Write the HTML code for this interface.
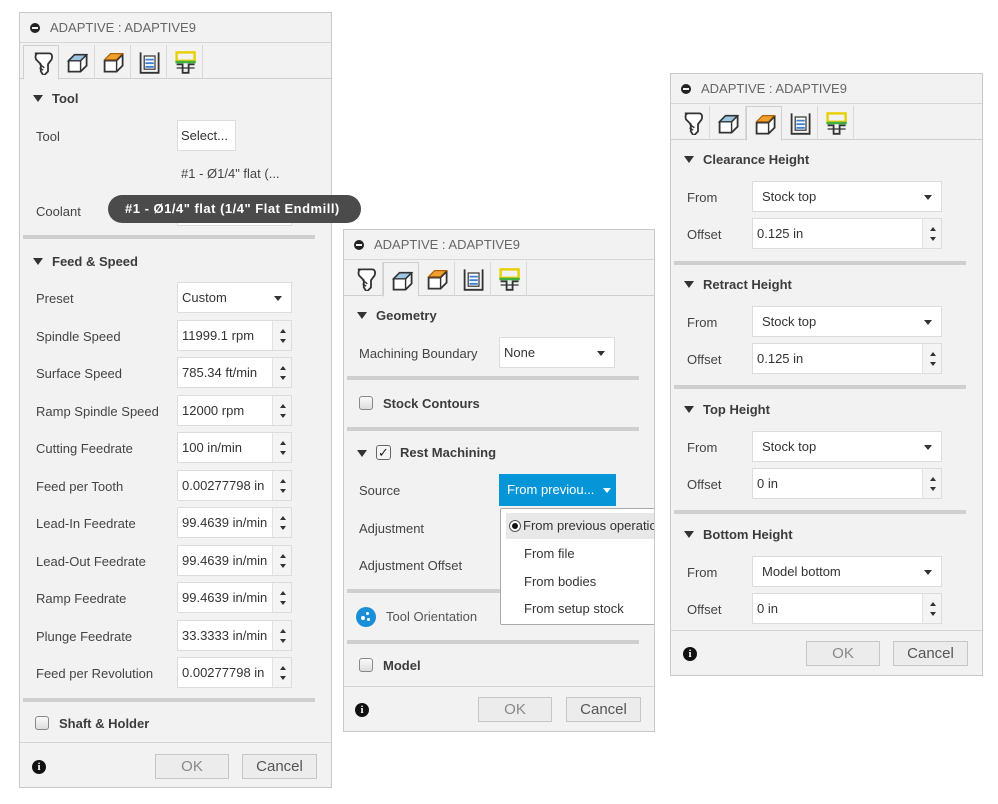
<!DOCTYPE html>
<html><head><meta charset="utf-8"><style>
*{box-sizing:border-box;margin:0;padding:0}
body{width:998px;height:804px;background:#fff;position:relative;overflow:hidden;font-family:"Liberation Sans",Arial,sans-serif;font-size:13px;color:#3c3c3c}
.p{position:absolute;background:#f2f2f2;border:1px solid #c9c9c9;overflow:hidden}
.a{position:absolute}
.title{position:absolute;left:0;right:0;top:0;height:30px;border-bottom:1px solid #d6d6d6;color:#666;font-size:13px;line-height:30px;padding-left:30px}
.title:before{content:"";position:absolute;left:10px;top:10px;width:10px;height:10px;border-radius:50%;background:#222}
.title:after{content:"";position:absolute;left:12px;top:14px;width:6px;height:2px;background:#f2f2f2}
.tabs{position:absolute;left:0;right:0;height:36px;border-bottom:1px solid #cfcfcf}
.tab{position:absolute;top:2px;width:36px;height:34px;border-right:1px solid #d8d8d8}
.tab.on{border:1px solid #cfcfcf;border-bottom:1px solid #f2f2f2;background:#f2f2f2;height:35px}
.tab svg{position:absolute;left:6px;top:5px}
.h{position:absolute;font-weight:bold;color:#3c3c3c;font-size:13px}
.h:before{content:"";display:inline-block;border-left:5px solid transparent;border-right:5px solid transparent;border-top:7px solid #333;margin-right:9px;vertical-align:1px}
.hc{position:absolute;font-weight:bold;font-size:13px;color:#3c3c3c}
.cb{display:inline-block;width:14px;height:14px;border:1px solid #888;border-radius:3px;background:linear-gradient(#fafafa,#ddd);vertical-align:-2px;margin-right:10px}
.l{position:absolute;font-size:13px;color:#444;white-space:nowrap}
.f{position:absolute;background:#fff;border:1px solid #dcdcdc;height:31px;line-height:29px;padding-left:4px;font-size:13px;color:#333;white-space:nowrap;overflow:hidden}
.sel:after{content:"";position:absolute;right:9px;top:13px;border-left:4px solid transparent;border-right:4px solid transparent;border-top:5px solid #333}
.sp{position:absolute;right:0;top:0;width:19px;height:29px;background:#f4f4f4;border-left:1px solid #e2e2e2}
.sp:before{content:"";position:absolute;left:7px;top:8px;border-left:3px solid transparent;border-right:3px solid transparent;border-bottom:4px solid #333}
.sp:after{content:"";position:absolute;left:7px;top:18px;border-left:3px solid transparent;border-right:3px solid transparent;border-top:4px solid #333}
.sep{position:absolute;height:4px;background:#cfcfcf}
.foot{position:absolute;left:0;right:0;border-top:1px solid #d6d6d6}
.btn{position:absolute;height:25px;border:1px solid #c6c6c6;background:#ececec;text-align:center;line-height:23px;font-size:15px;color:#888}
.btn.c{color:#555}
.info{position:absolute;width:14px;height:14px;border-radius:50%;background:#111;color:#fff;font-weight:bold;font-size:11px;text-align:center;line-height:14px;font-family:"Liberation Serif",serif}
</style></head><body>

<svg width="0" height="0" style="position:absolute"><defs>
<g id="i1"><path d="M4 2h12c2 0 3 2 2 5l-3 4v6l-3 3h-1l-2-3v-6l-4-4c-1-3 0-5 2-5z" fill="#fff" stroke="#333" stroke-width="1.5"/><path d="M8 11l4 3M8 14l3 2" stroke="#333" stroke-width="1.2"/></g>
<g id="i2"><path d="M3 9l5-5h10v9l-5 5H3z" fill="#fff" stroke="#333" stroke-width="1.5"/><path d="M8 4h10l-5 5H3z" fill="#9cc6e6" stroke="#333" stroke-width="1.2"/><path d="M13 9v9M13 9l5-5" stroke="#333" stroke-width="1.2"/></g>
<g id="i3"><path d="M3 9l5-5h10v9l-5 5H3z" fill="#fff" stroke="#333" stroke-width="1.5"/><path d="M8 3h10l-5 5H3z" fill="#f0a030" stroke="#b06000" stroke-width="1"/><path d="M13 9v9M13 9l5-5M3 9h10" stroke="#333" stroke-width="1.2"/></g>
<g id="i4"><path d="M3 2v17h15V2" fill="none" stroke="#333" stroke-width="1.5"/><rect x="6" y="5" width="9" height="11" fill="#fff" stroke="#333"/><path d="M7 8h7M7 11h7M7 14h7" stroke="#3b7fd0" stroke-width="1.5"/></g>
<g id="i5"><rect x="3" y="2" width="15" height="7" fill="none" stroke="#e8d000" stroke-width="2"/><path d="M2 10h17" stroke="#40b040" stroke-width="2"/><path d="M3 12h5v7h5v-7h5" fill="none" stroke="#333" stroke-width="1.5"/><path d="M3 15h15" stroke="#333" stroke-width="1"/></g>
</defs></svg>

<!-- LEFT PANEL -->
<div class="p" style="left:19px;top:12px;width:313px;height:776px">
<div class="title">ADAPTIVE : ADAPTIVE9</div>
<div class="tabs" style="top:30px">
<div class="tab on" style="left:3px"><svg width="24" height="24" viewBox="0 0 20 20"><use href="#i1"/></svg></div>
<div class="tab" style="left:39px"><svg width="24" height="24" viewBox="0 0 20 20"><use href="#i2"/></svg></div>
<div class="tab" style="left:75px"><svg width="24" height="24" viewBox="0 0 20 20"><use href="#i3"/></svg></div>
<div class="tab" style="left:111px"><svg width="24" height="24" viewBox="0 0 20 20"><use href="#i4"/></svg></div>
<div class="tab" style="left:147px"><svg width="24" height="24" viewBox="0 0 20 20"><use href="#i5"/></svg></div>
</div>
<div class="h" style="left:13px;top:78px">Tool</div>
<div class="l" style="left:16px;top:116px">Tool</div>
<div class="f" style="left:157px;top:107px;width:59px;padding-left:3px">Select...</div>
<div class="l" style="left:161px;top:153px">#1 - Ø1/4" flat (...</div>
<div class="l" style="left:16px;top:191px">Coolant</div>
<div class="f" style="left:157px;top:182px;width:115px"></div>
<div class="sep" style="left:3px;top:222px;width:292px"></div>
<div class="h" style="left:13px;top:241px">Feed &amp; Speed</div>
<div class="l" style="left:16px;top:278px">Preset</div><div class="f sel" style="left:157px;top:269px;width:115px">Custom</div>
<div class="l" style="left:16px;top:316px">Spindle Speed</div><div class="f" style="left:157px;top:307px;width:115px">11999.1 rpm<div class="sp"></div></div>
<div class="l" style="left:16px;top:353px">Surface Speed</div><div class="f" style="left:157px;top:344px;width:115px">785.34 ft/min<div class="sp"></div></div>
<div class="l" style="left:16px;top:391px">Ramp Spindle Speed</div><div class="f" style="left:157px;top:382px;width:115px">12000 rpm<div class="sp"></div></div>
<div class="l" style="left:16px;top:428px">Cutting Feedrate</div><div class="f" style="left:157px;top:419px;width:115px">100 in/min<div class="sp"></div></div>
<div class="l" style="left:16px;top:466px">Feed per Tooth</div><div class="f" style="left:157px;top:457px;width:115px">0.00277798 in<div class="sp"></div></div>
<div class="l" style="left:16px;top:503px">Lead-In Feedrate</div><div class="f" style="left:157px;top:494px;width:115px">99.4639 in/min<div class="sp"></div></div>
<div class="l" style="left:16px;top:541px">Lead-Out Feedrate</div><div class="f" style="left:157px;top:532px;width:115px">99.4639 in/min<div class="sp"></div></div>
<div class="l" style="left:16px;top:578px">Ramp Feedrate</div><div class="f" style="left:157px;top:569px;width:115px">99.4639 in/min<div class="sp"></div></div>
<div class="l" style="left:16px;top:616px">Plunge Feedrate</div><div class="f" style="left:157px;top:607px;width:115px">33.3333 in/min<div class="sp"></div></div>
<div class="l" style="left:16px;top:653px">Feed per Revolution</div><div class="f" style="left:157px;top:644px;width:115px">0.00277798 in<div class="sp"></div></div>
<div class="sep" style="left:3px;top:685px;width:292px"></div>
<div class="hc" style="left:15px;top:703px"><span class="cb"></span>Shaft &amp; Holder</div>
<div class="foot" style="top:729px"></div>
<div class="info" style="left:12px;top:747px">i</div>
<div class="btn" style="left:135px;top:741px;width:74px">OK</div>
<div class="btn c" style="left:222px;top:741px;width:75px">Cancel</div>
</div>

<!-- tooltip -->
<div class="a" style="left:108px;top:195px;width:253px;height:28px;background:#4b4b4b;border-radius:14px;color:#fff;font-weight:bold;font-size:13px;line-height:28px;padding-left:17px;white-space:nowrap;overflow:hidden;letter-spacing:0.5px">#1 - Ø1/4" flat (1/4" Flat Endmill)</div>

<!-- MIDDLE PANEL -->
<div class="p" style="left:343px;top:229px;width:312px;height:503px">
<div class="title">ADAPTIVE : ADAPTIVE9</div>
<div class="tabs" style="top:30px">
<div class="tab" style="left:3px"><svg width="24" height="24" viewBox="0 0 20 20"><use href="#i1"/></svg></div>
<div class="tab on" style="left:39px"><svg width="24" height="24" viewBox="0 0 20 20"><use href="#i2"/></svg></div>
<div class="tab" style="left:75px"><svg width="24" height="24" viewBox="0 0 20 20"><use href="#i3"/></svg></div>
<div class="tab" style="left:111px"><svg width="24" height="24" viewBox="0 0 20 20"><use href="#i4"/></svg></div>
<div class="tab" style="left:147px"><svg width="24" height="24" viewBox="0 0 20 20"><use href="#i5"/></svg></div>
</div>
<div class="h" style="left:13px;top:78px">Geometry</div>
<div class="l" style="left:15px;top:116px">Machining Boundary</div><div class="f sel" style="left:155px;top:107px;width:116px">None</div>
<div class="sep" style="left:3px;top:146px;width:292px"></div>
<div class="hc" style="left:15px;top:166px"><span class="cb"></span>Stock Contours</div>
<div class="sep" style="left:3px;top:197px;width:292px"></div>
<div class="a" style="left:13px;top:220px;border-left:5px solid transparent;border-right:5px solid transparent;border-top:7px solid #333"></div>
<div class="a" style="left:32px;top:215px;width:15px;height:15px;border:1px solid #666;border-radius:3px;background:#f6f6f6;font-size:13px;line-height:13px;text-align:center;color:#222">✓</div>
<div class="hc" style="left:56px;top:215px">Rest Machining</div>
<div class="l" style="left:15px;top:253px">Source</div>
<div class="a" style="left:155px;top:244px;width:117px;height:32px;background:#0696d7;color:#fff;line-height:32px;padding-left:8px;font-size:13px">From previou...</div>
<div class="a" style="left:259px;top:258px;border-left:4px solid transparent;border-right:4px solid transparent;border-top:5px solid #fff"></div>
<div class="l" style="left:15px;top:291px">Adjustment</div>
<div class="l" style="left:15px;top:328px">Adjustment Offset</div>
<div class="sep" style="left:3px;top:359px;width:292px"></div>
<div class="a" style="left:12px;top:377px;width:20px;height:20px;border-radius:50%;background:#1a8fd8"><div class="a" style="left:5px;top:9px;width:4px;height:4px;background:#fff;border-radius:50%"></div><div class="a" style="left:10px;top:5px;width:3px;height:3px;background:#fff;border-radius:50%"></div><div class="a" style="left:11px;top:11px;width:3px;height:3px;background:#fff;border-radius:50%"></div></div>
<div class="l" style="left:42px;top:379px;color:#555">Tool Orientation</div>
<div class="sep" style="left:3px;top:410px;width:292px"></div>
<div class="hc" style="left:15px;top:428px"><span class="cb"></span>Model</div>
<div class="foot" style="top:456px"></div>
<div class="info" style="left:11px;top:473px">i</div>
<div class="btn" style="left:134px;top:467px;width:74px">OK</div>
<div class="btn c" style="left:222px;top:467px;width:75px">Cancel</div>
<!-- dropdown -->
<div class="a" style="left:156px;top:278px;width:160px;height:117px;background:#fff;border:1px solid #aaa;border-radius:2px">
<div class="a" style="left:5px;top:4px;width:160px;height:26px;background:#e8e8e8"></div>
<div class="a" style="left:8px;top:11px;width:12px;height:12px;border-radius:50%;border:1px solid #555;background:#fff"><div class="a" style="left:2px;top:2px;width:6px;height:6px;border-radius:50%;background:#111"></div></div>
<div class="l" style="left:22px;top:9px;color:#333">From previous operation</div>
<div class="l" style="left:23px;top:37px;color:#333">From file</div>
<div class="l" style="left:23px;top:65px;color:#333">From bodies</div>
<div class="l" style="left:23px;top:92px;color:#333">From setup stock</div>
</div>
</div>

<!-- RIGHT PANEL -->
<div class="p" style="left:670px;top:73px;width:313px;height:603px">
<div class="title">ADAPTIVE : ADAPTIVE9</div>
<div class="tabs" style="top:30px">
<div class="tab" style="left:3px"><svg width="24" height="24" viewBox="0 0 20 20"><use href="#i1"/></svg></div>
<div class="tab" style="left:39px"><svg width="24" height="24" viewBox="0 0 20 20"><use href="#i2"/></svg></div>
<div class="tab on" style="left:75px"><svg width="24" height="24" viewBox="0 0 20 20"><use href="#i3"/></svg></div>
<div class="tab" style="left:111px"><svg width="24" height="24" viewBox="0 0 20 20"><use href="#i4"/></svg></div>
<div class="tab" style="left:147px"><svg width="24" height="24" viewBox="0 0 20 20"><use href="#i5"/></svg></div>
</div>
<div class="h" style="left:13px;top:78px">Clearance Height</div>
<div class="l" style="left:16px;top:116px">From</div><div class="f sel" style="left:81px;top:107px;width:190px;padding-left:9px">Stock top</div>
<div class="l" style="left:16px;top:153px">Offset</div><div class="f" style="left:81px;top:144px;width:190px">0.125 in<div class="sp"></div></div>
<div class="sep" style="left:3px;top:187px;width:292px"></div>
<div class="h" style="left:13px;top:203px">Retract Height</div>
<div class="l" style="left:16px;top:241px">From</div><div class="f sel" style="left:81px;top:232px;width:190px;padding-left:9px">Stock top</div>
<div class="l" style="left:16px;top:278px">Offset</div><div class="f" style="left:81px;top:269px;width:190px">0.125 in<div class="sp"></div></div>
<div class="sep" style="left:3px;top:311px;width:292px"></div>
<div class="h" style="left:13px;top:328px">Top Height</div>
<div class="l" style="left:16px;top:366px">From</div><div class="f sel" style="left:81px;top:357px;width:190px;padding-left:9px">Stock top</div>
<div class="l" style="left:16px;top:403px">Offset</div><div class="f" style="left:81px;top:394px;width:190px">0 in<div class="sp"></div></div>
<div class="sep" style="left:3px;top:436px;width:292px"></div>
<div class="h" style="left:13px;top:453px">Bottom Height</div>
<div class="l" style="left:16px;top:491px">From</div><div class="f sel" style="left:81px;top:482px;width:190px;padding-left:9px">Model bottom</div>
<div class="l" style="left:16px;top:528px">Offset</div><div class="f" style="left:81px;top:519px;width:190px">0 in<div class="sp"></div></div>
<div class="foot" style="top:556px"></div>
<div class="info" style="left:12px;top:573px">i</div>
<div class="btn" style="left:135px;top:567px;width:74px">OK</div>
<div class="btn c" style="left:222px;top:567px;width:75px">Cancel</div>
</div>
</body></html>
